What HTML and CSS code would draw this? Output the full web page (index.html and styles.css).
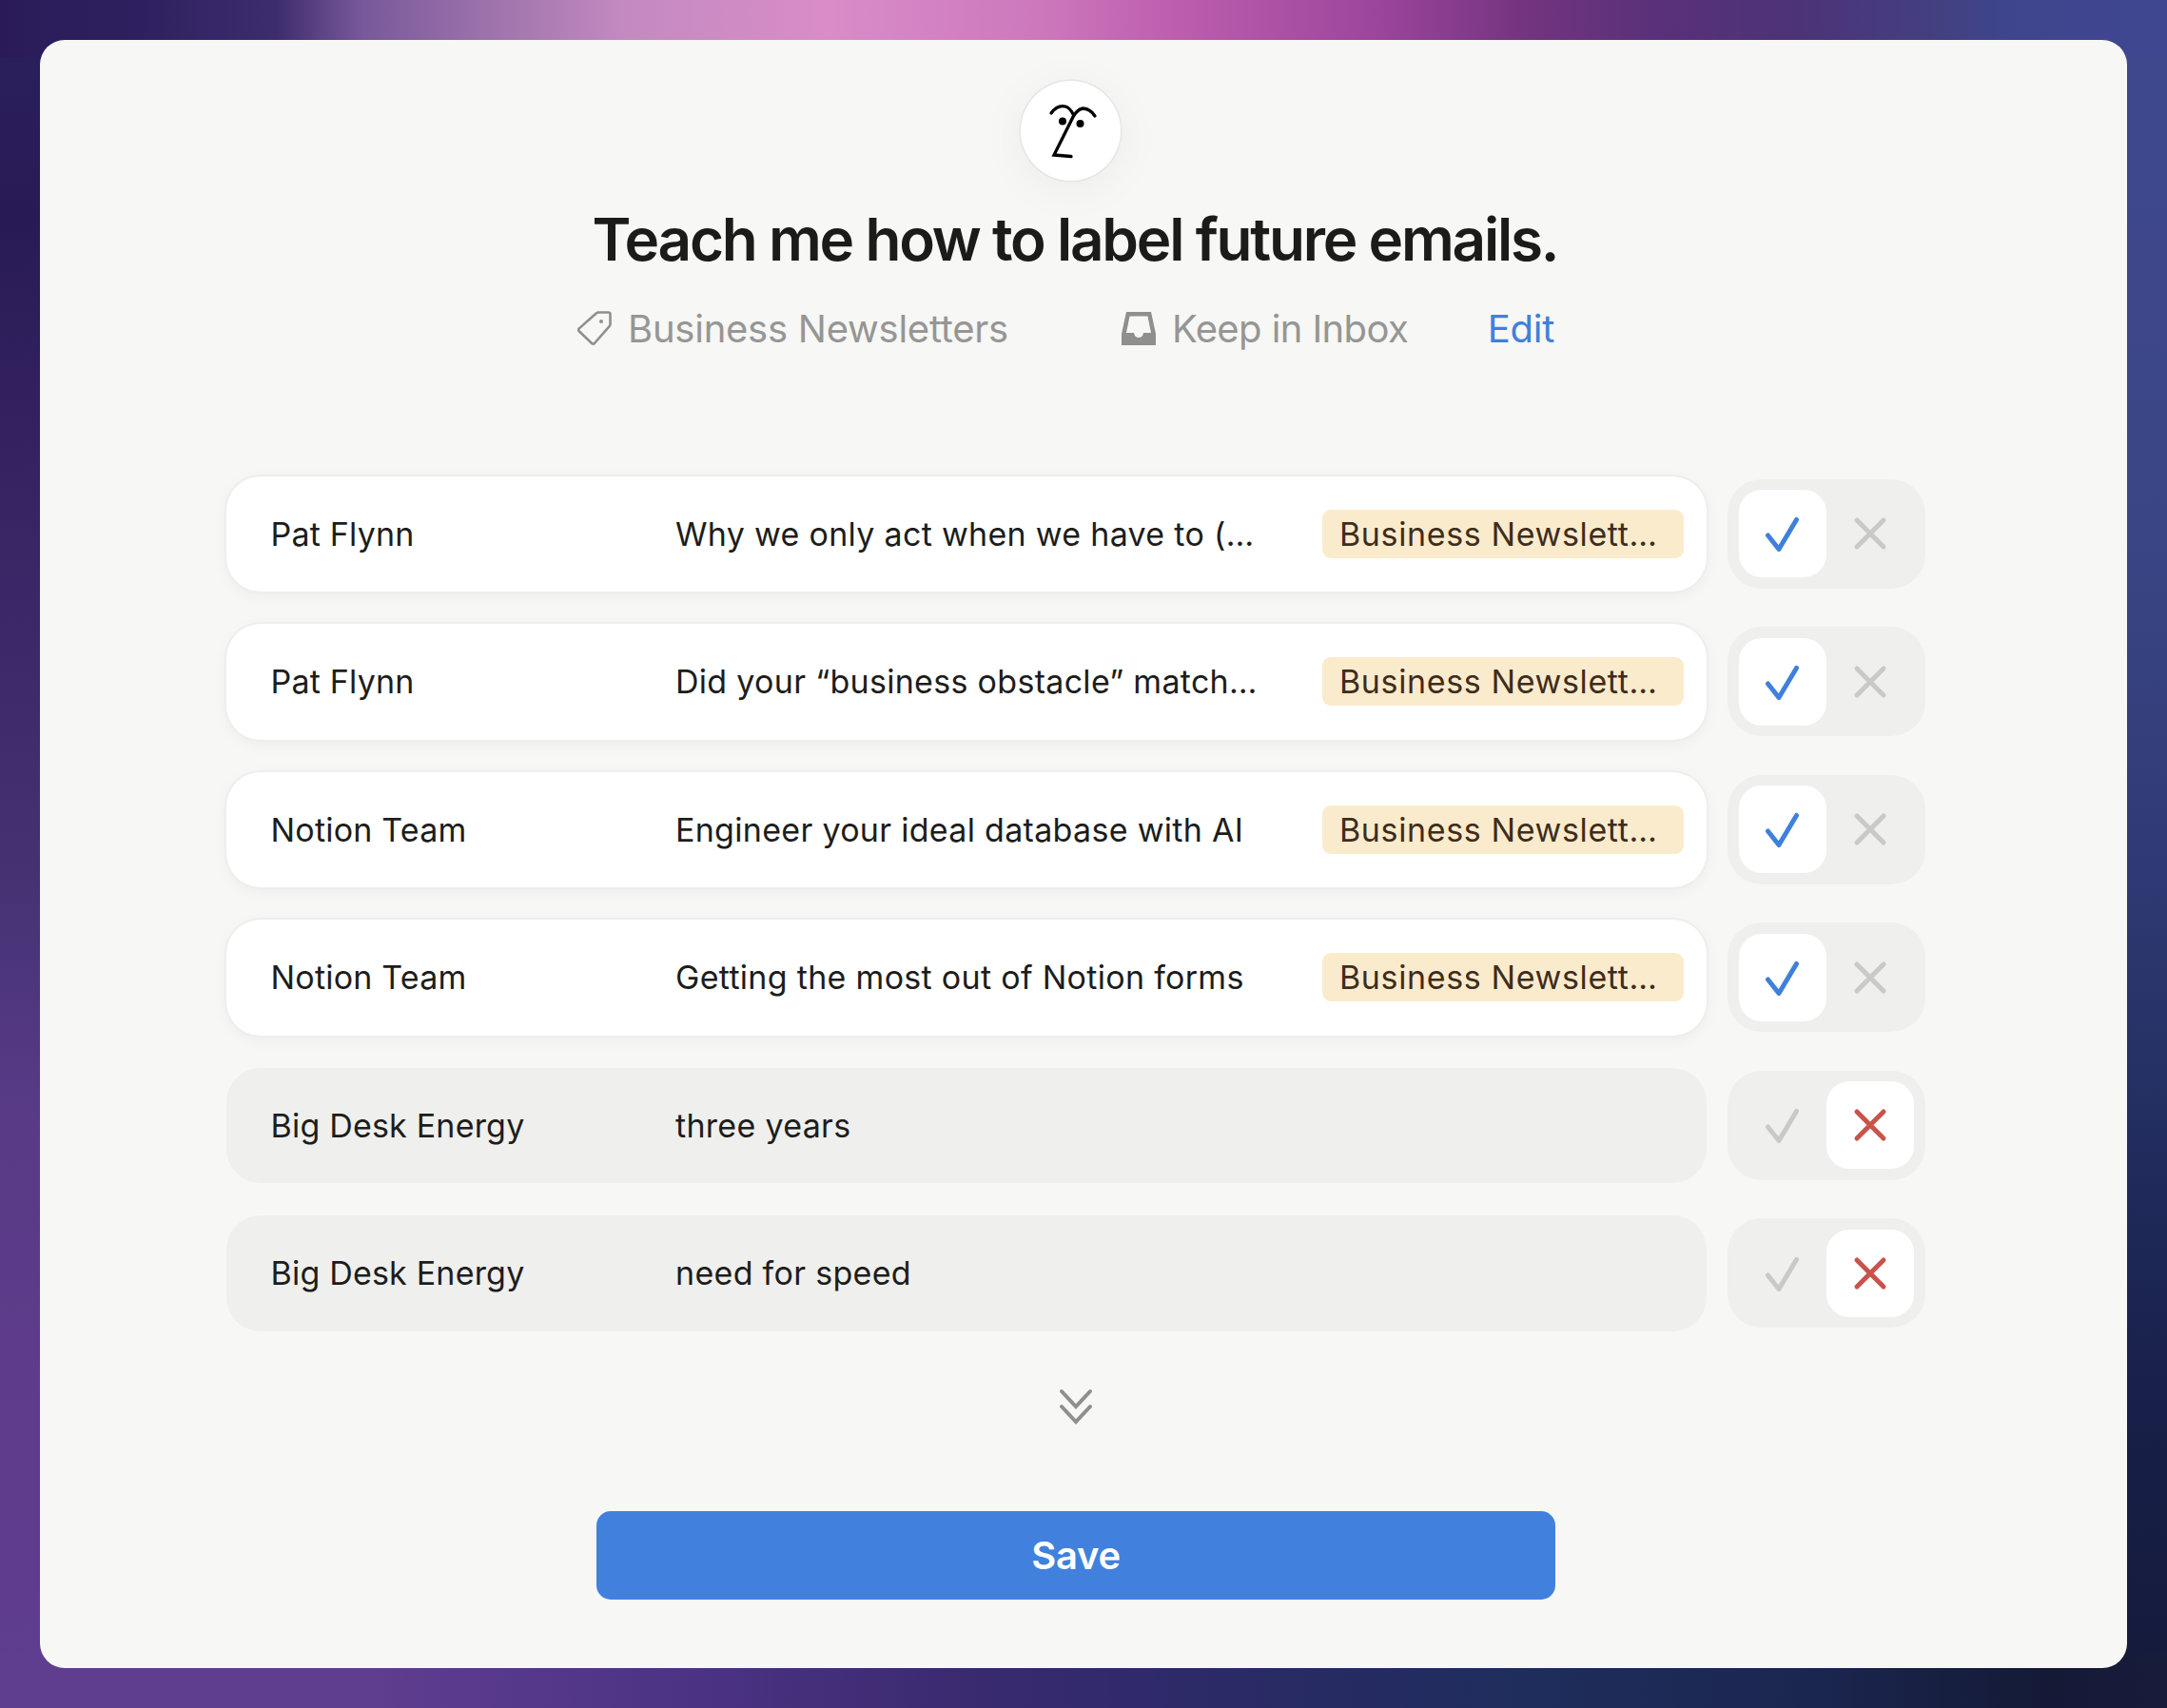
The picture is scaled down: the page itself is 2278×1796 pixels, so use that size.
FILE: index.html
```html
<!DOCTYPE html>
<html lang="en">
<head>
<meta charset="utf-8">
<title>Teach me how to label future emails</title>
<link rel="stylesheet" href="styles.css">
</head>
<body>
<main class="card">
  <header class="head">
    <div class="avatar">
      <svg class="logo" viewBox="33 15 105 105" width="105" height="105" fill="none" stroke="#000" stroke-width="3.300" stroke-linecap="round" stroke-linejoin="miter">
        <path d="M65 49C70 42 76 41 80 42C84 43 86 46 88 50"/>
        <path d="M111 52C107 46 102 44 98 44C92 45 88 52 85 59L68 93L86 94.500"/>
        <circle cx="77" cy="57.500" r="4" fill="#000" stroke="none"/>
        <circle cx="95.500" cy="60" r="4" fill="#000" stroke="none"/>
      </svg>
    </div>
    <h1 class="title">Teach me how to label future emails.</h1>
    <div class="meta">
      <span class="meta-item meta-label">
        <svg class="meta-icon" viewBox="0 0 36 36" width="36" height="36" fill="none" stroke="#8f8f8d" stroke-width="2.600" stroke-linejoin="round">
          <path d="M22 1.500H32.500C33.600 1.500 34.500 2.400 34.500 3.500V14C34.500 14.800 34.200 15.500 33.600 16.100L17.900 34C17.100 34.800 15.900 34.800 15.100 34L1.800 21.200C1 20.400 1 19.200 1.800 18.400L20 2.300C20.500 1.800 21.200 1.500 22 1.500Z"/>
          <circle cx="25" cy="11" r="2" fill="#8f8f8d" stroke="none"/>
        </svg>
        Business Newsletters
      </span>
      <span class="meta-item meta-action">
        <svg class="meta-icon" viewBox="0 0 36 35" width="36" height="35" fill="#8f8f8d">
          <path fill-rule="evenodd" d="M5 0H31L36 23V35H0V23ZM8.500 4.500L5 22H13C13.500 25.500 15.500 27 18 27C20.500 27 22.500 25.500 23 22H31L27.500 4.500Z"/>
        </svg>
        Keep in Inbox
      </span>
      <a class="edit" href="#">Edit</a>
    </div>
  </header>

  <section class="list">
    <div class="item">
      <div class="row row-on"><span class="from">Pat Flynn</span><span class="subject">Why we only act when we have to (…</span><span class="tag">Business Newslett…</span></div>
      <div class="toggle">
        <span class="opt opt-active"><svg class="glyph" viewBox="0 0 40 40" width="40" height="40"><path class="stroke-blue" d="M4.500 22L16 36.500L34.500 5.500"/></svg></span>
        <span class="opt"><svg class="glyph" viewBox="0 0 40 40" width="40" height="40"><path class="stroke-gray" d="M6 6L34 34M34 6L6 34"/></svg></span>
      </div>
    </div>
    <div class="item">
      <div class="row row-on"><span class="from">Pat Flynn</span><span class="subject">Did your “business obstacle” match…</span><span class="tag">Business Newslett…</span></div>
      <div class="toggle">
        <span class="opt opt-active"><svg class="glyph" viewBox="0 0 40 40" width="40" height="40"><path class="stroke-blue" d="M4.500 22L16 36.500L34.500 5.500"/></svg></span>
        <span class="opt"><svg class="glyph" viewBox="0 0 40 40" width="40" height="40"><path class="stroke-gray" d="M6 6L34 34M34 6L6 34"/></svg></span>
      </div>
    </div>
    <div class="item">
      <div class="row row-on"><span class="from">Notion Team</span><span class="subject">Engineer your ideal database with AI</span><span class="tag">Business Newslett…</span></div>
      <div class="toggle">
        <span class="opt opt-active"><svg class="glyph" viewBox="0 0 40 40" width="40" height="40"><path class="stroke-blue" d="M4.500 22L16 36.500L34.500 5.500"/></svg></span>
        <span class="opt"><svg class="glyph" viewBox="0 0 40 40" width="40" height="40"><path class="stroke-gray" d="M6 6L34 34M34 6L6 34"/></svg></span>
      </div>
    </div>
    <div class="item">
      <div class="row row-on"><span class="from">Notion Team</span><span class="subject">Getting the most out of Notion forms</span><span class="tag">Business Newslett…</span></div>
      <div class="toggle">
        <span class="opt opt-active"><svg class="glyph" viewBox="0 0 40 40" width="40" height="40"><path class="stroke-blue" d="M4.500 22L16 36.500L34.500 5.500"/></svg></span>
        <span class="opt"><svg class="glyph" viewBox="0 0 40 40" width="40" height="40"><path class="stroke-gray" d="M6 6L34 34M34 6L6 34"/></svg></span>
      </div>
    </div>
    <div class="item">
      <div class="row"><span class="from">Big Desk Energy</span><span class="subject">three years</span></div>
      <div class="toggle">
        <span class="opt"><svg class="glyph" viewBox="0 0 40 40" width="40" height="40"><path class="stroke-gray" d="M4.500 22L16 36.500L34.500 5.500"/></svg></span>
        <span class="opt opt-active"><svg class="glyph" viewBox="0 0 40 40" width="40" height="40"><path class="stroke-red" d="M6 6L34 34M34 6L6 34"/></svg></span>
      </div>
    </div>
    <div class="item">
      <div class="row"><span class="from">Big Desk Energy</span><span class="subject">need for speed</span></div>
      <div class="toggle">
        <span class="opt"><svg class="glyph" viewBox="0 0 40 40" width="40" height="40"><path class="stroke-gray" d="M4.500 22L16 36.500L34.500 5.500"/></svg></span>
        <span class="opt opt-active"><svg class="glyph" viewBox="0 0 40 40" width="40" height="40"><path class="stroke-red" d="M6 6L34 34M34 6L6 34"/></svg></span>
      </div>
    </div>
  </section>

  <div class="more">
    <svg viewBox="0 0 36 38" width="36" height="38" fill="none" stroke="#8f8f8c" stroke-width="4" stroke-linecap="round" stroke-linejoin="miter">
      <path d="M3 3L18 19L33 3"/>
      <path d="M3 19L18 35L33 19"/>
    </svg>
  </div>

  <button class="save" type="button">Save</button>
</main>
</body>
</html>
```
FILE: styles.css
```css
* { box-sizing: border-box; }

html, body { margin: 0; height: 100%; }

body {
  width: 2278px;
  height: 1796px;
  overflow: hidden;
  padding: 42px 42px 42px;
  font-family: Inter, "Liberation Sans", sans-serif;
  color: #1d1d1b;
  background-color: #3a2a70;
  background-repeat: no-repeat;
  background-size: 100% 60px, 100% 60px, 60px 100%, 60px 100%;
  background-position: 0 0, 0 100%, 0 0, 100% 0;
  background-image:
    linear-gradient(90deg, #2a1b58 0, #2e2060 145px, #3d2c6e 290px, #78589a 380px, #9c72ab 510px, #c38ac0 655px, #d98cc8 870px, #cd78bd 1090px, #bd5eae 1235px, #9b459c 1450px, #74347f 1600px, #59307a 1745px, #4c3378 1890px, #43407f 2035px, #3e458c 2105px, #3f4791 2278px),
    linear-gradient(90deg, #5f3d8f 0, #5f3d8f 390px, #4c3384 720px, #3a2a6f 1017px, #2a2a66 1300px, #1f2d5c 1600px, #1b2650 1900px, #141a36 2150px, #161c3a 2278px),
    linear-gradient(180deg, #2b1f5e 0, #281b55 229px, #3a2565 573px, #443273 916px, #573a85 1145px, #5f3c8c 1489px, #5f3d8f 100%),
    linear-gradient(180deg, #40498f 0, #3a4585 573px, #2f3a74 916px, #1f2a5a 1260px, #181f48 1489px, #141a3a 100%);
}

.card {
  width: 2194px;
  height: 1712px;
  padding: 43px 212px 0 196px;
  border-radius: 26px;
  background: #f7f7f5;
  display: flex;
  flex-direction: column;
  align-items: center;
}

.head {
  width: 100%;
  display: flex;
  flex-direction: column;
  align-items: center;
}

.avatar {
  width: 105px;
  height: 105px;
  margin-right: 11px;
  border-radius: 50%;
  background: #fff;
  box-shadow: 0 0 0 1.500px #e6e6e4, 0 8px 50px rgba(0, 0, 0, .05);
}

.logo { display: block; }

.title {
  margin: 23.500px 2px 0 0;
  font-size: 62px;
  line-height: 76px;
  font-weight: 600;
  letter-spacing: -2.220px;
  color: #1b1b19;
  white-space: nowrap;
}

.meta {
  margin-top: 30.500px;
  width: 100%;
  display: flex;
  align-items: center;
  padding-left: 369px;
  height: 50px;
  font-size: 40px;
  letter-spacing: -.25px;
  color: #969694;
}

.meta-item {
  display: flex;
  align-items: center;
  gap: 17px;
  white-space: nowrap;
}

.meta-action { margin-left: 119px; letter-spacing: -.6px; }

.meta-icon { flex: none; display: block; }

.edit {
  margin-left: 83.500px;
  color: #3f80dc;
  text-decoration: none;
}

.list {
  margin-top: 130.600px;
  width: 100%;
  display: flex;
  flex-direction: column;
  gap: 34px;
}

.item {
  display: flex;
  align-items: center;
  gap: 22px;
}

.row {
  width: 1556px;
  height: 121.500px;
  flex: none;
  padding: 0 24px 0 46.500px;
  border-radius: 36px;
  background: #efefed;
  display: flex;
  align-items: center;
  font-size: 34px;
  letter-spacing: .2px;
  color: #1d1d1b;
}

.row-on {
  background: #fff;
  box-shadow: 0 0 0 2px #eeeeec, 0 4px 16px rgba(0, 0, 0, .05);
}

.from { width: 425.500px; flex: none; white-space: nowrap; }

.subject { flex: 1; min-width: 0; white-space: nowrap; letter-spacing: .3px; }

.tag {
  width: 380px;
  height: 51px;
  flex: none;
  padding-left: 18px;
  border-radius: 9px;
  background: #fbebcd;
  color: #402c1b;
  display: flex;
  align-items: center;
  white-space: nowrap;
  letter-spacing: .62px;
}

.toggle {
  width: 208px;
  height: 115px;
  flex: none;
  padding: 11.500px 12px;
  border-radius: 36px;
  background: #efefed;
  display: flex;
}

.opt {
  width: 92px;
  height: 92px;
  border-radius: 24px;
  display: flex;
  align-items: center;
  justify-content: center;
}

.opt-active { background: #fff; }

.glyph path {
  fill: none;
  stroke-width: 5;
  stroke-linecap: round;
  stroke-linejoin: round;
}

.glyph .stroke-blue { stroke: #3f80dc; }
.glyph .stroke-gray { stroke: #c9c9c7; }
.glyph .stroke-red { stroke: #c9534b; }

.more {
  margin-top: 60.500px;
  display: flex;
  justify-content: center;
}

.more svg { display: block; }

.save {
  margin-top: 90.500px;
  width: 1008px;
  height: 93px;
  border: 0;
  border-radius: 15px;
  background: #4181dd;
  color: #fff;
  font-family: inherit;
  font-size: 40px;
  font-weight: 600;
  letter-spacing: -.3px;
}
```
